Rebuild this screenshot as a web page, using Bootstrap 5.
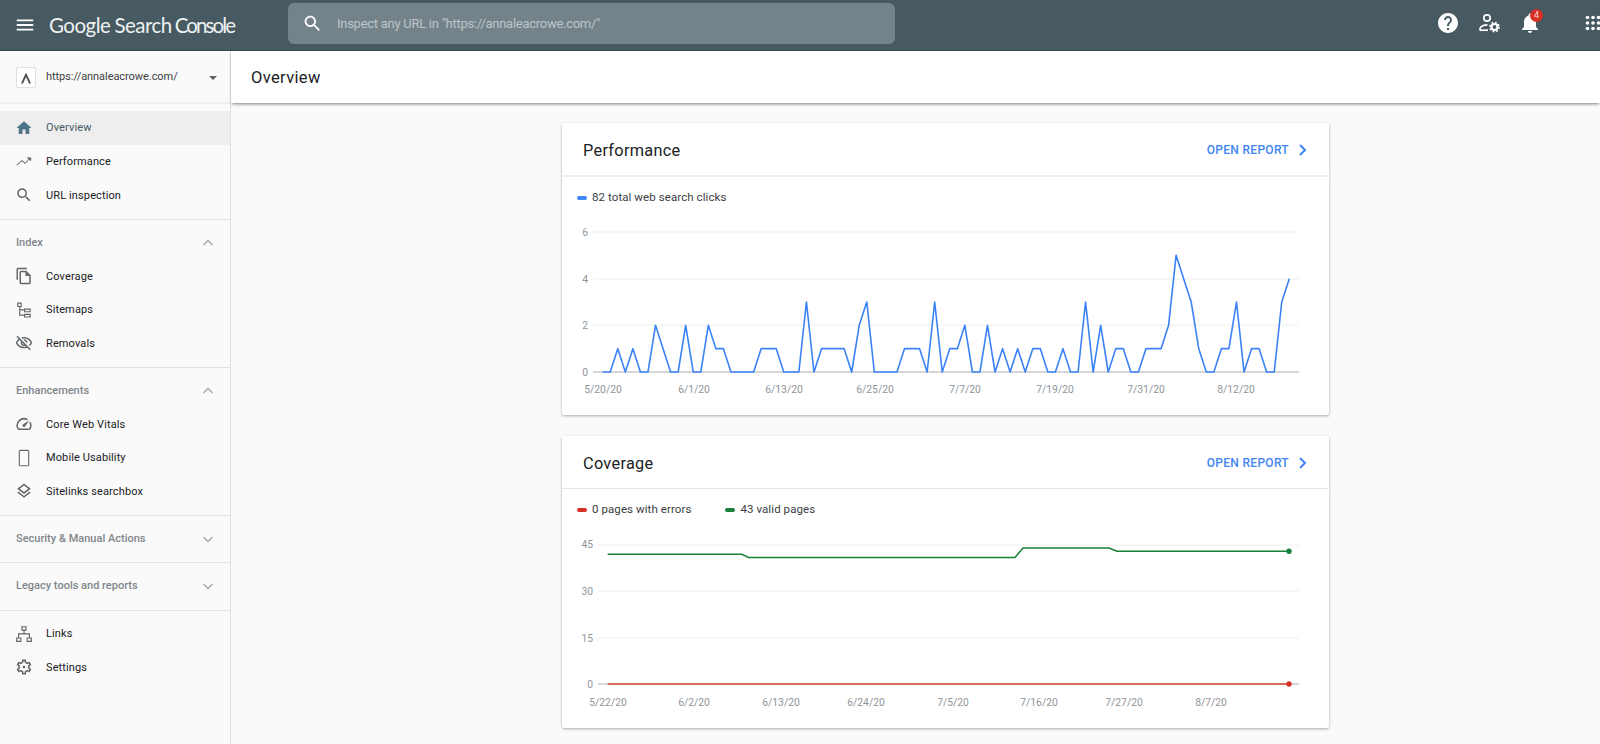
<!DOCTYPE html>
<html lang="en">
<head>
<meta charset="utf-8">
<title>Overview - Google Search Console</title>
<link href="https://cdn.jsdelivr.net/npm/bootstrap@5.3.0/dist/css/bootstrap.min.css" rel="stylesheet">
<style>
html,body{height:744px;overflow:hidden}
body{font-family:Roboto,"Liberation Sans",sans-serif;background:#fafafa;color:#202124}
.gsc-top{height:51px;background:#475a62;border-bottom:1px solid #37474f;color:#fff}
.gsc-top svg{fill:currentColor;display:block}
.gsc-burger{margin-left:14px;width:22px;height:22px}
.gsc-logo{margin-left:13px;font-family:Lato,"Open Sans",sans-serif;font-size:20.5px;letter-spacing:-.5px;width:239px;color:#eef1f2;white-space:nowrap}
.gsc-google{margin-right:4px}
.gsc-console{margin-left:3px;letter-spacing:-1.9px}
.gsc-search{width:607px;height:41px;margin-top:-3px;background:#74838a;border-radius:6px;padding-left:14px;color:#bcc5c9;font-size:13px;letter-spacing:-.27px}
.gsc-search svg{width:21px;height:21px;margin-right:14px;color:#fff;flex:none}
.gsc-tool{position:absolute;top:11px;width:24px;height:24px}
.gsc-help{left:1436px}.gsc-admin{left:1477px}.gsc-bell{left:1518px}
.gsc-top .gsc-apps{left:1582px;top:12px;width:22px;height:22px}
.gsc-count{position:absolute;left:1530px;top:9px;width:13px;height:13px;border-radius:50%;background:#d93025;font-size:9px;line-height:13px;text-align:center;color:#fbdcd9}
.gsc-shell{height:693px}
.gsc-side{width:231px;flex:none;border-right:1px solid #e0e0e0;background:#fafafa}
.gsc-prop{height:53px;border-bottom:2px solid #efefef;padding:2px 13px 0 16px;font-size:11px;color:#3c4043;letter-spacing:-.06px}
.gsc-avatar{width:20px;height:21px;border:1px solid #e0e0e0;border-radius:2px;background:#fff;margin-right:10px;flex:none}
.gsc-avatar svg{width:16px;height:16px}
.gsc-caret{width:0;height:0;border-left:4px solid transparent;border-right:4px solid transparent;border-top:4px solid #5f6368;margin-left:auto}
.gsc-group{border-bottom:1px solid #e2e2e2;padding:6.5px 0}
.gsc-group:first-of-type{padding-top:7px}
.gsc-group:last-child{border-bottom:0}
.gsc-item{height:33.5px;padding:0 0 0 15px;gap:13px;font-size:11px;letter-spacing:.12px;color:#202124}
.gsc-item span{padding-top:1px}
.gsc-item svg{width:18px;height:18px;flex:none;fill:#63676b}
.gsc-item.gsc-on{background:#eeeeee;color:#455a64;height:34px}
.gsc-item.gsc-on svg{fill:#4f7489}
.gsc-head{height:33.5px;padding:0 14px 0 16px;font-size:11px;font-weight:500;color:#80868b}
.gsc-head svg{width:16px;height:16px;fill:none;stroke:#a2a7ac;stroke-width:1.3}
.gsc-main{min-width:0}
.gsc-bar{height:52px;background:#fff;box-shadow:0 2px 3px -1px rgba(0,0,0,.5);padding:2px 0 0 20px;font-size:16.5px;letter-spacing:.35px;color:#202124;position:relative}
.gsc-cards{padding:20px 0 0 331px;gap:21px}
.gsc-card{width:767px;height:292px;border:0;border-radius:2px;box-shadow:0 1px 3px rgba(0,0,0,.32);background:#fff}
.gsc-card-top{height:54px;padding:5px 22px 0 21px;background:#fff;border-bottom:2px solid #eeeeee;border-radius:2px 2px 0 0}
.gsc-card + .gsc-card .gsc-card-top{height:53px;border-bottom:1px solid #e6e6e6}
.gsc-title{font-size:16.3px;letter-spacing:.3px;color:#202124}
.gsc-open{font-size:12px;font-weight:500;letter-spacing:.3px;color:#4285f4;gap:9px;margin-top:-3px}
.gsc-open svg{width:9px;height:12px;fill:none;stroke:#4285f4;stroke-width:2}
.gsc-legend{padding:12px 0 0 15px;height:39px;font-size:11.5px;letter-spacing:.08px;color:#3c4043;gap:34px}
.gsc-card + .gsc-card .gsc-legend{height:40px}
.gsc-key{width:10px;height:4px;border-radius:2px;margin-right:5px;flex:none}
.gsc-chart{display:block;font-family:Roboto,"Liberation Sans",sans-serif;font-size:10.3px;fill:#8f9499}
.gsc-grid{stroke:#eeeeee;stroke-width:1}
</style>
</head>
<body>
<header class="gsc-top d-flex align-items-center">
  <svg class="gsc-burger flex-none" viewBox="0 0 24 24"><path d="M3 18h18v-2H3v2zm0-5h18v-2H3v2zm0-7v2h18V6H3z"/></svg>
  <div class="gsc-logo"><span class="gsc-google">Google</span><span>Search</span><span class="gsc-console">Console</span></div>
  <div class="gsc-search d-flex align-items-center">
    <svg viewBox="0 0 24 24"><path d="M15.5 14h-.79l-.28-.27C15.41 12.59 16 11.11 16 9.5 16 5.91 13.09 3 9.5 3S3 5.91 3 9.5 5.91 16 9.5 16c1.61 0 3.09-.59 4.23-1.57l.27.28v.79l5 4.99L20.49 19l-4.99-5zm-6 0C7.01 14 5 11.99 5 9.5S7.01 5 9.5 5 14 7.01 14 9.5 11.99 14 9.500 14z"/></svg>
    <span>Inspect any URL in "https://annaleacrowe.com/"</span>
  </div>
  <svg class="gsc-tool gsc-help" viewBox="0 0 24 24"><path d="M12 2C6.48 2 2 6.48 2 12s4.48 10 10 10 10-4.48 10-10S17.52 2 12 2zm1 17h-2v-2h2v2zm2.07-7.75l-.9.92C13.45 12.9 13 13.5 13 15h-2v-.5c0-1.1.45-2.1 1.17-2.83l1.24-1.26c.37-.36.59-.86.59-1.41 0-1.1-.9-2-2-2s-2 .9-2 2H8c0-2.21 1.79-4 4-4s4 1.79 4 4c0 .88-.36 1.68-.93 2.25z"/></svg>
  <svg class="gsc-tool gsc-admin" viewBox="0 0 24 24"><circle cx="10" cy="7" r="3.2" fill="none" stroke="currentColor" stroke-width="1.7"/><path d="M3 19.5v-1.4c0-3 4.5-4.300 7.500-4.300" fill="none" stroke="currentColor" stroke-width="1.700"/><path d="M3 19.200h8" stroke="currentColor" stroke-width="1.700"/><circle cx="17.500" cy="16" r="3" fill="none" stroke="currentColor" stroke-width="2.200"/><circle cx="17.500" cy="16" r="4.600" fill="none" stroke="currentColor" stroke-width="1.600" stroke-dasharray="1.800 1.800"/></svg>
  <svg class="gsc-tool gsc-bell" viewBox="0 0 24 24"><path d="M12 22c1.100 0 2-.9 2-2h-4c0 1.100.89 2 2 2zm6-6v-5c0-3.070-1.640-5.640-4.500-6.320V4c0-.83-.67-1.500-1.500-1.500s-1.500.67-1.500 1.500v.68C7.630 5.360 6 7.920 6 11v5l-2 2v1h16v-1l-2-2z"/></svg>
  <div class="gsc-count">4</div>
  <svg class="gsc-tool gsc-apps" viewBox="0 0 24 24"><circle cx="6" cy="6" r="2"/><circle cx="12" cy="6" r="2"/><circle cx="18" cy="6" r="2"/><circle cx="6" cy="12" r="2"/><circle cx="12" cy="12" r="2"/><circle cx="18" cy="12" r="2"/><circle cx="6" cy="18" r="2"/><circle cx="12" cy="18" r="2"/><circle cx="18" cy="18" r="2"/></svg>
</header>

<div class="gsc-shell d-flex">
  <aside class="gsc-side">
    <div class="gsc-prop d-flex align-items-center">
      <div class="gsc-avatar d-flex align-items-center justify-content-center"><svg viewBox="0 0 16 16"><path d="M8 2.500L3 13.500H5L8 7l3 6.500h2z" fill="#4a4f54"/></svg></div>
      <span>https://annaleacrowe.com/</span>
      <span class="gsc-caret"></span>
    </div>

    <nav class="gsc-group">
      <div class="gsc-item gsc-on d-flex align-items-center"><svg viewBox="0 0 24 24"><path d="M10 20v-6h4v6h5v-8h3L12 3 2 12h3v8z"/></svg><span>Overview</span></div>
      <div class="gsc-item d-flex align-items-center"><svg viewBox="0 0 24 24"><path d="M15.500 6l2.600 2.200-4.700 4.900-4-3.700L2 15.800l.7.900 6.700-5.800 4 3.700 5.500-5.700L21.500 11V6z"/></svg><span>Performance</span></div>
      <div class="gsc-item d-flex align-items-center"><svg viewBox="0 0 24 24"><path d="M15.500 14h-.79l-.28-.27C15.410 12.590 16 11.110 16 9.500 16 5.910 13.090 3 9.500 3S3 5.910 3 9.500 5.910 16 9.500 16c1.610 0 3.090-.59 4.230-1.570l.27.28v.79l5 4.990L20.490 19l-4.990-5zm-6 0C7.010 14 5 11.990 5 9.500S7.010 5 9.500 5 14 7.010 14 9.500 11.990 14 9.500 14z"/></svg><span>URL inspection</span></div>
    </nav>

    <nav class="gsc-group">
      <div class="gsc-head d-flex align-items-center justify-content-between"><span>Index</span><svg viewBox="0 0 16 16"><path d="M3.500 10l4.500-4.500 4.500 4.500"/></svg></div>
      <div class="gsc-item d-flex align-items-center"><svg viewBox="0 0 24 24"><path d="M16 1H4c-1.100 0-2 .9-2 2v14h2V3h12V1zm-1 4H8c-1.100 0-1.990.9-1.990 2L6 21c0 1.100.89 2 1.990 2H19c1.100 0 2-.9 2-2V11l-6-6zM8 21V7h6v5h5v9H8z"/></svg><span>Coverage</span></div>
      <div class="gsc-item d-flex align-items-center"><svg viewBox="0 0 24 24"><path d="M3 2h6v6H7v3h5v-1h9v5h-9v-2.500H7V18h5v-1h9v5h-9v-2.500H5.500V8H3V2zm1.500 1.500v3h3v-3h-3zm9 8v2h6v-2h-6zm0 7v2h6v-2h-6z"/></svg><span>Sitemaps</span></div>
      <div class="gsc-item d-flex align-items-center"><svg viewBox="0 0 24 24"><path d="M12 6c3.790 0 7.170 2.130 8.820 5.500-.59 1.220-1.420 2.270-2.410 3.120l1.410 1.410c1.390-1.230 2.490-2.770 3.180-4.530C21.270 7.110 17 4 12 4c-1.270 0-2.490.2-3.640.57l1.650 1.650C10.660 6.090 11.320 6 12 6zm-1.070 1.140L13 9.210c.57.25 1.030.71 1.280 1.280l2.070 2.070c.08-.34.14-.7.14-1.070C16.500 9.010 14.480 7 12 7c-.37 0-.72.05-1.070.14zM2.010 3.870l2.680 2.680C3.060 7.830 1.770 9.530 1 11.500 2.730 15.890 7 19 12 19c1.520 0 2.980-.29 4.320-.82l3.420 3.420 1.410-1.410L3.420 2.450 2.010 3.870zm7.500 7.500l2.610 2.610c-.04.01-.08.02-.12.02-1.380 0-2.500-1.120-2.500-2.500 0-.05.01-.08.01-.13zm-3.400-3.400l1.750 1.750c-.23.55-.36 1.150-.36 1.780 0 2.480 2.020 4.500 4.500 4.500.63 0 1.230-.13 1.770-.36l.98.98c-.88.24-1.800.38-2.750.38-3.790 0-7.170-2.130-8.820-5.500.7-1.430 1.720-2.610 2.930-3.530z"/></svg><span>Removals</span></div>
    </nav>

    <nav class="gsc-group">
      <div class="gsc-head d-flex align-items-center justify-content-between"><span>Enhancements</span><svg viewBox="0 0 16 16"><path d="M3.500 10l4.500-4.500 4.500 4.500"/></svg></div>
      <div class="gsc-item d-flex align-items-center"><svg viewBox="0 0 24 24"><path d="M20.380 8.570l-1.230 1.850a8 8 0 0 1-.22 7.580H5.070A8 8 0 0 1 15.580 6.850l1.850-1.230A10 10 0 0 0 3.350 19a2 2 0 0 0 1.720 1h13.850a2 2 0 0 0 1.740-1 10 10 0 0 0-.27-10.440zm-9.790 6.840a2 2 0 0 0 2.830 0l5.660-8.490-8.490 5.660a2 2 0 0 0 0 2.830z"/></svg><span>Core Web Vitals</span></div>
      <div class="gsc-item d-flex align-items-center"><svg viewBox="0 0 24 24"><path d="M17 1H7c-1.100 0-2 .9-2 2v18c0 1.100.9 2 2 2h10c1.100 0 2-.9 2-2V3c0-1.100-.9-2-2-2zm.5 20.500h-11v-19h11v19z"/></svg><span>Mobile Usability</span></div>
      <div class="gsc-item d-flex align-items-center"><svg viewBox="0 0 24 24"><path d="M11.990 18.540l-7.370-5.730L3 14.070l9 7 9-7-1.630-1.270zM12 16l7.360-5.730L21 9l-9-7-9 7 1.630 1.270L12 16zm0-11.470L17.740 9 12 13.470 6.260 9 12 4.530z"/></svg><span>Sitelinks searchbox</span></div>
    </nav>

    <nav class="gsc-group">
      <div class="gsc-head d-flex align-items-center justify-content-between"><span>Security &amp; Manual Actions</span><svg viewBox="0 0 16 16"><path d="M3.500 6l4.500 4.500 4.500-4.500"/></svg></div>
    </nav>
    <nav class="gsc-group">
      <div class="gsc-head d-flex align-items-center justify-content-between"><span>Legacy tools and reports</span><svg viewBox="0 0 16 16"><path d="M3.500 6l4.500 4.500 4.500-4.500"/></svg></div>
    </nav>

    <nav class="gsc-group">
      <div class="gsc-item d-flex align-items-center"><svg viewBox="0 0 24 24"><path d="M8.500 1.500h7v6h-2.700V11H20v5.500h2.500v6h-7v-6H18.500V12.500h-13v4H8.500v6h-7v-6h2.500V11h7.300V7.500H8.500v-6zM10 3v3h4V3h-4zM3 18v3h4v-3H3zm14 0v3h4v-3h-4z"/></svg><span>Links</span></div>
      <div class="gsc-item d-flex align-items-center"><svg viewBox="0 0 24 24"><path d="M19.430 12.980c.04-.32.07-.64.07-.98 0-.34-.03-.66-.07-.98l2.110-1.650c.19-.15.24-.42.12-.64l-2-3.460c-.09-.16-.26-.25-.44-.25-.06 0-.12.01-.17.03l-2.490 1c-.52-.4-1.080-.73-1.690-.98l-.38-2.650C14.460 2.180 14.250 2 14 2h-4c-.25 0-.46.18-.49.42l-.38 2.650c-.61.25-1.170.59-1.690.98l-2.490-1c-.06-.02-.12-.03-.18-.03-.17 0-.34.09-.43.25l-2 3.460c-.13.22-.07.49.12.64l2.110 1.650c-.04.32-.07.65-.07.98 0 .33.03.66.07.98l-2.110 1.650c-.19.15-.24.42-.12.64l2 3.460c.09.16.26.25.44.25.06 0 .12-.01.17-.03l2.490-1c.52.4 1.080.73 1.690.98l.38 2.650c.03.24.24.42.49.42h4c.25 0 .46-.18.49-.42l.38-2.650c.61-.25 1.170-.59 1.690-.98l2.490 1c.06.02.12.03.18.03.17 0 .34-.09.43-.25l2-3.460c.12-.22.07-.49-.12-.64l-2.110-1.650zm-1.980-1.710c.04.31.05.52.05.73 0 .21-.02.43-.05.73l-.14 1.130.89.7 1.080.84-.7 1.210-1.270-.51-1.040-.42-.9.68c-.43.32-.84.56-1.250.73l-1.060.43-.16 1.130-.2 1.350h-1.400l-.19-1.350-.16-1.130-1.060-.43c-.43-.18-.83-.41-1.230-.71l-.91-.7-1.060.43-1.270.51-.7-1.210 1.080-.84.89-.7-.14-1.130c-.03-.31-.05-.54-.05-.74s.02-.43.05-.73l.14-1.130-.89-.7-1.080-.84.7-1.210 1.270.51 1.040.42.9-.68c.43-.32.84-.56 1.250-.73l1.060-.43.16-1.130.2-1.350h1.390l.19 1.350.16 1.130 1.060.43c.43.18.83.41 1.230.71l.91.7 1.060-.43 1.270-.51.7 1.210-1.070.85-.89.7.14 1.130zM12 10.200a1.800 1.800 0 1 0 0 3.600 1.800 1.800 0 0 0 0-3.600z"/></svg><span>Settings</span></div>
    </nav>
  </aside>

  <main class="gsc-main flex-grow-1">
    <div class="gsc-bar d-flex align-items-center">Overview</div>
    <div class="gsc-cards d-flex flex-column">

      <section class="card gsc-card">
        <div class="gsc-card-top d-flex align-items-center justify-content-between">
          <div class="gsc-title">Performance</div>
          <div class="gsc-open d-flex align-items-center">OPEN REPORT<svg viewBox="0 0 9 12"><path d="M2 1l5 5-5 5"/></svg></div>
        </div>
        <div class="gsc-legend d-flex align-items-start">
          <div class="d-flex align-items-center"><span class="gsc-key" style="background:#4285f4"></span>82 total web search clicks</div>
        </div>
        <svg class="gsc-chart" width="767" height="199" viewBox="0 0 767 199">
          <path class="gsc-grid" d="M31 16H737M31 63H737M31 109H737"/>
          <path d="M31 156H737" stroke="#d6d6d6" stroke-width="2"/>
          <g text-anchor="end"><text x="26" y="20">6</text><text x="26" y="67">4</text><text x="26" y="113">2</text><text x="26" y="160">0</text></g>
          <polyline fill="none" stroke="#3b82f6" stroke-width="1.600" stroke-linejoin="round" vector-effect="non-scaling-stroke" transform="translate(40.700 156) scale(7.545 -23.330)" points="0,0 1,0 2,1 3,0 4,1 5,0 6,0 7,2 8,1 9,0 10,0 11,2 12,0 13,0 14,2 15,1 16,1 17,0 18,0 19,0 20,0 21,1 22,1 23,1 24,0 25,0 26,0 27,3 28,0 29,1 30,1 31,1 32,1 33,0 34,2 35,3 36,0 37,0 38,0 39,0 40,1 41,1 42,1 43,0 44,3 45,0 46,1 47,1 48,2 49,0 50,0 51,2 52,0 53,1 54,0 55,1 56,0 57,1 58,1 59,0 60,0 61,1 62,0 63,0 64,3 65,0 66,2 67,0 68,1 69,1 70,0 71,0 72,1 73,1 74,1 75,2 76,5 77,4 78,3 79,1 80,0 81,0 82,1 83,1 84,3 85,0 86,1 87,1 88,0 89,0 90,3 91,4"/>
          <g text-anchor="middle"><text x="41" y="177">5/20/20</text><text x="132" y="177">6/1/20</text><text x="222" y="177">6/13/20</text><text x="313" y="177">6/25/20</text><text x="403" y="177">7/7/20</text><text x="493" y="177">7/19/20</text><text x="584" y="177">7/31/20</text><text x="674" y="177">8/12/20</text></g>
        </svg>
      </section>

      <section class="card gsc-card">
        <div class="gsc-card-top d-flex align-items-center justify-content-between">
          <div class="gsc-title">Coverage</div>
          <div class="gsc-open d-flex align-items-center">OPEN REPORT<svg viewBox="0 0 9 12"><path d="M2 1l5 5-5 5"/></svg></div>
        </div>
        <div class="gsc-legend d-flex align-items-start">
          <div class="d-flex align-items-center"><span class="gsc-key" style="background:#d93025"></span>0 pages with errors</div>
          <div class="d-flex align-items-center"><span class="gsc-key" style="background:#188038"></span>43 valid pages</div>
        </div>
        <svg class="gsc-chart" width="767" height="199" viewBox="0 0 767 199">
          <path class="gsc-grid" d="M36 16H737M36 62H737M36 109H737"/>
          <path d="M36 155H737" stroke="#b0b0b0" stroke-width="1"/>
          <g text-anchor="end"><text x="31" y="19">45</text><text x="31" y="66">30</text><text x="31" y="113">15</text><text x="31" y="159">0</text></g>
          <polyline fill="none" stroke="#188038" stroke-width="1.500" points="45.700,25.300 179.700,25.300 186.700,28.400 453,28.400 461,19 547,19 555,22.300 727,22.300"/>
          <circle cx="727" cy="22.300" r="2.700" fill="#188038"/>
          <path d="M45.700 155H727" stroke="#dc6a61" stroke-width="2"/>
          <circle cx="727" cy="155" r="2.700" fill="#d93025"/>
          <g text-anchor="middle"><text x="46" y="177">5/22/20</text><text x="132" y="177">6/2/20</text><text x="219" y="177">6/13/20</text><text x="304" y="177">6/24/20</text><text x="391" y="177">7/5/20</text><text x="477" y="177">7/16/20</text><text x="562" y="177">7/27/20</text><text x="649" y="177">8/7/20</text></g>
        </svg>
      </section>

    </div>
  </main>
</div>
<script src="https://cdn.jsdelivr.net/npm/bootstrap@5.3.0/dist/js/bootstrap.bundle.min.js"></script>
</body>
</html>
